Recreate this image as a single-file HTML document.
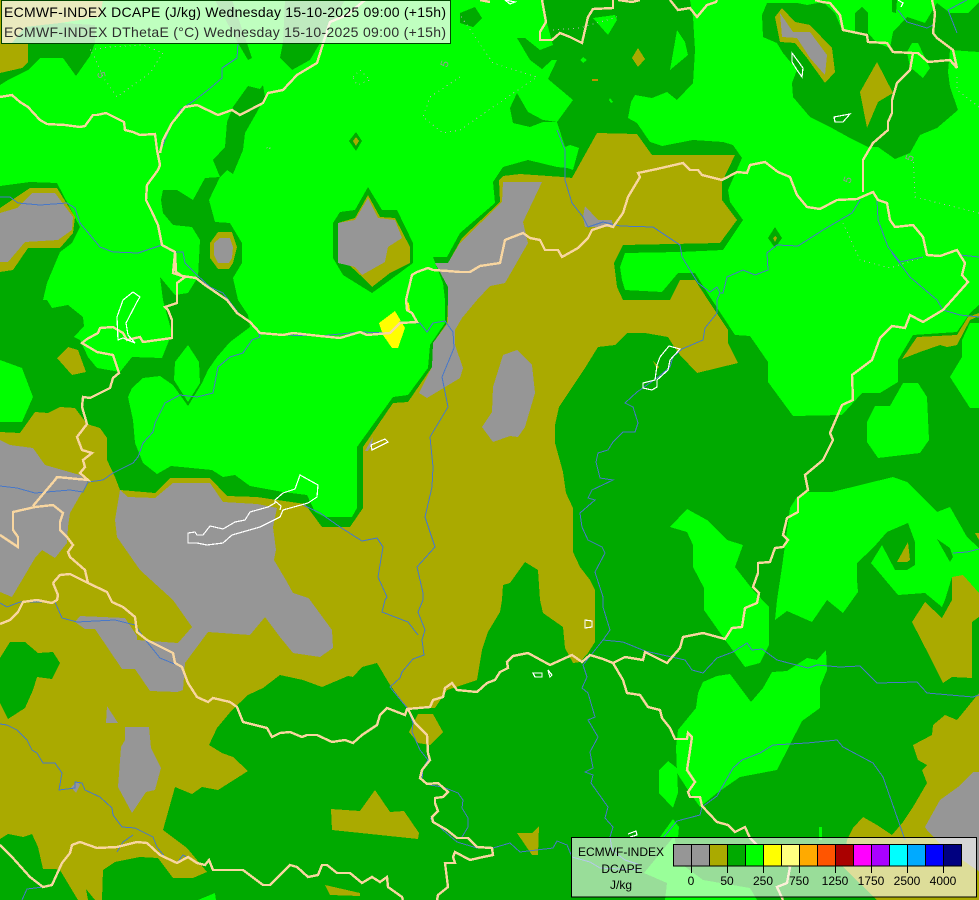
<!DOCTYPE html>
<html><head><meta charset="utf-8"><title>ECMWF-INDEX DCAPE</title>
<style>html,body{margin:0;padding:0;background:#0f0;width:979px;height:900px;overflow:hidden}svg{display:block}text{font-family:"Liberation Sans",sans-serif}</style></head>
<body>
<svg width="979" height="900" viewBox="0 0 979 900" xmlns="http://www.w3.org/2000/svg" shape-rendering="crispEdges">
<rect width="979" height="900" fill="#00ff00"/>
<g fill="#00aa00">
<polygon points="543,0 690,0 693,17 695,50 693,83 677,100 667,92 652,98 635,95 631,102 628,118 637,123 650,142 662,146 693,140 723,142 733,145 742,158 728,190 730,202 743,220 723,250 680,252 625,253 620,267 622,280 625,290 662,292 678,273 695,273 710,297 735,335 750,336 768,362 768,382 793,416 842,415 862,393 880,393 898,382 898,360 913,335 957,332 970,313 979,305 979,900 0,900 0,186 30,182 57,183 80,227 72,243 60,252 47,283 43,300 47,300 52,308 68,305 83,317 84,326 74,337 80,340 88,357 97,368 120,372 132,357 162,358 172,333 163,300 160,277 175,295 188,293 198,277 200,240 192,227 173,225 163,213 161,200 163,190 177,190 193,200 205,178 220,177 213,160 225,147 227,122 233,107 248,86 260,89 263,85 265,97 257,112 245,133 243,150 233,174 227,170 220,177 209,200 215,222 230,223 242,243 242,263 233,278 238,300 248,315 250,327 230,342 217,357 208,370 202,383 188,406 173,385 160,376 143,378 132,388 128,397 133,420 135,443 143,463 157,474 171,466 212,470 223,477 235,475 250,486 283,492 307,495 315,512 325,517 352,517 357,508 357,447 393,397 408,395 428,368 430,345 445,323 445,300 443,283 433,257 447,257 460,233 495,203 493,182 503,167 528,160 557,167 567,168 565,147 557,122 573,100 548,79 557,60 552,60 542,69 530,60 517,38 525,38 540,50 553,45 547,23"/>
<polygon points="517,93 528,112 543,120 557,122 543,122 530,127 513,123 510,108"/>
<polygon points="460,13 475,7 482,18 473,27 460,23"/>
<polygon points="762,15 767,3 797,3 807,5 823,2 835,13 842,30 855,33 855,13 862,7 868,13 868,33 877,43 890,48 893,32 907,17 925,23 937,3 950,13 968,13 979,2 979,52 950,50 948,72 950,87 958,110 937,128 920,135 910,153 895,159 878,147 868,147 850,138 830,127 810,117 793,97 792,83 797,70 783,53 777,43 763,37"/>
<polygon points="892,0 897,0 896,13 892,12"/>
<polygon points="12,43 25,27 60,23 95,25 95,43 90,56 76,76 63,58 40,58 28,70 8,80 0,85 0,43"/>
<polygon points="215,0 232,0 252,58 248,60 238,43"/>
<polygon points="285,0 345,0 320,43 310,60 292,70 280,58 283,43"/>
<polygon points="368,187 382,210 397,210 413,243 413,263 390,280 372,293 343,275 333,258 333,223 340,212 355,210"/>
<polygon points="356,132 362,141 356,151 349,141"/>
<polygon points="775,227 782,238 775,248 768,238"/>
</g>
<g fill="#00ff00">
<polygon points="570,145 579,148 573,170 567,168 565,147"/>
<polygon points="593,18 615,15 617,20 608,35"/>
<polygon points="677,30 685,42 688,55 670,70 673,53"/>
<polygon points="583,57 587,60 583,63 580,60"/>
<polygon points="610,98 613,102 611,103 609,100"/>
<polygon points="912,43 918,43 930,68 923,78 910,67 907,52"/>
<polygon points="188,345 199,362 200,383 188,402 174,380 175,362"/>
<polygon points="0,360 22,368 33,397 22,422 0,422"/>
<polygon points="970,323 979,323 979,408 970,408 950,377 962,357 962,340"/>
<polygon points="903,383 918,383 927,397 929,440 920,453 878,458 867,442 867,422 875,406 890,406"/>
<polygon points="797,497 808,492 832,492 893,477 907,482 937,512 950,507 967,537 979,548 979,593 963,575 952,577 945,600 942,607 925,593 898,595 871,563 882,545 895,570 907,570 915,565 915,542 908,523 887,532 873,548 857,563 857,580 858,592 843,613 827,600 812,622 787,611 775,620 777,600 782,567 790,508"/>
<polygon points="687,509 707,520 727,540 743,545 735,567 753,590 769,607 769,645 760,663 745,667 723,637 704,610 704,588 693,567 693,545 687,532 670,527"/>
<polygon points="703,682 717,676 730,674 751,702 763,688 772,672 787,671 807,658 817,660 826,650 827,670 820,687 820,708 802,721 777,770 740,777 717,793 700,807 688,790 677,773 676,747 678,730 696,708 698,693"/>
<polygon points="659,770 668,761 677,768 678,793 673,808 659,793"/>
<polygon points="660,837 673,819 679,827 678,838"/>
<polygon points="819,827 822,827 822,840 819,840"/>
<polygon points="675,835 644,873 667,883 665,900 757,900 750,888 703,880 676,860"/>
<polygon points="198,900 215,893 216,900"/>
</g>
<polygon fill="#00aa00" points="937,539 950,548 953,557 950,562"/>
<g fill="#aaaa00">
<polygon points="0,432 20,433 35,412 48,413 60,407 75,408 87,424 100,428 107,438 107,460 115,477 120,490 155,493 170,478 210,478 227,496 257,497 277,500 305,504 322,527 350,527 363,508 363,447 393,403 408,402 432,367 433,343 447,323 448,300 448,287 435,263 448,263 462,238 500,202 499,180 503,176 520,174 563,177 572,178 597,133 637,134 652,155 735,155 722,182 722,200 737,220 720,243 623,245 614,263 617,287 623,300 670,300 680,280 695,280 708,300 728,330 728,343 738,363 697,373 680,355 673,345 668,337 645,333 627,333 615,345 598,347 585,368 559,407 555,425 555,443 563,472 566,493 573,508 573,552 580,567 590,580 595,590 595,642 588,653 580,662 573,663 565,648 563,627 543,613 540,600 538,570 525,562 510,583 503,585 502,600 500,612 488,632 482,650 477,680 447,690 435,708 407,708 390,685 377,663 362,667 353,677 348,676 322,687 303,680 280,675 263,688 248,695 232,710 217,728 209,745 222,753 233,757 248,771 218,790 202,787 192,794 175,787 163,830 187,848 207,872 193,878 173,878 158,858 140,857 115,862 103,870 102,900 95,900 86,889 88,900 78,900 60,870 55,869 43,869 38,847 32,834 23,837 8,834 0,839"/>
<polygon points="0,0 103,0 100,17 60,23 25,27 12,43 0,43"/>
<polygon points="0,43 28,43 28,62 22,68 0,73"/>
<polygon points="0,208 30,188 57,188 75,217 73,233 60,248 28,248 13,270 0,272"/>
<polygon points="368,195 380,217 395,218 410,247 410,263 390,273 372,287 360,275 347,263 338,262 338,223 355,218"/>
<polygon points="218,232 232,232 237,247 233,263 229,269 218,269 210,258 210,243"/>
<polygon points="356,137 359,141 356,146 353,141"/>
<polygon points="775,236 777,238 775,242 773,238"/>
<polygon points="638,48 645,59 638,67 632,58"/>
<polygon points="775,17 782,8 795,22 810,25 832,48 835,72 825,83 807,58 795,43 780,42"/>
<polygon points="877,62 893,93 878,102 867,128 860,92"/>
<polygon points="57,358 68,347 78,350 86,372 72,375"/>
<polygon points="902,359 917,337 957,335 968,317 979,313 979,316 970,320 957,345 947,347 940,345 920,352"/>
<polygon points="897,562 908,542 910,560 907,562"/>
<polygon points="952,577 963,575 979,593 979,617 972,622 972,678 952,677 943,683 930,657 912,622 925,602 942,618 952,600"/>
<polygon points="945,715 957,720 979,693 979,900 877,900 843,867 847,840 853,828 863,817 877,825 892,835 903,822 913,807 927,783 922,770 927,765 918,760 913,745 932,735 933,725"/>
<polygon points="418,714 433,714 443,732 430,745 418,743 409,732"/>
<polygon points="375,790 390,812 404,811 419,833 418,839 332,830 331,809 360,811"/>
<polygon points="325,885 360,893 360,896 330,895"/>
<polygon points="517,833 532,833 539,826 538,855 532,855"/>
<polygon points="653,361 659,367 657,369"/>
<polygon points="975,533 979,533 979,540"/>
<polygon fill="#c09000" points="592,79 598,79 598,81 592,81"/>
</g>
<polygon fill="#00aa00" points="0,658 10,642 25,642 38,653 53,652 60,663 52,679 37,677 33,690 25,708 8,719 0,703"/>
<g fill="#969696">
<polygon points="0,213 17,208 32,193 55,193 73,217 72,230 58,240 25,242 8,262 0,262"/>
<polygon points="368,198 378,218 395,220 402,238 388,247 385,262 362,275 355,267 338,263 338,223 355,220"/>
<polygon points="220,238 230,238 233,247 232,258 229,263 218,263 214,255 214,243"/>
<polygon points="780,13 793,32 810,32 827,55 825,75 810,58 797,38 782,37"/>
<polygon points="460,243 502,202 503,182 542,182 523,222 528,243 505,283 490,286 477,300 462,318 455,330 455,345 463,368 460,378 427,398 419,393 432,367 433,343 448,323 448,287 435,263 448,263"/>
<polygon points="585,206 598,220 612,220 613,227 585,227 583,217"/>
<polygon points="365,451 373,437 372,444 368,451"/>
<polygon points="517,350 532,365 535,393 525,427 518,437 510,436 493,442 482,427 492,412 493,387 503,355"/>
<polygon points="120,490 128,497 155,498 173,483 210,483 223,502 257,504 277,508 273,527 276,550 274,560 287,582 293,593 308,598 310,600 332,630 333,648 320,657 293,653 280,637 265,617 250,635 208,632 185,663 183,690 177,692 150,691 135,669 122,669 95,629 85,629 75,622 80,616 125,618 137,636 137,640 178,643 192,627 173,600 140,570 117,537 115,520"/>
<polygon points="0,440 10,445 33,448 45,465 80,475 88,482 82,492 70,513 68,527 67,543 55,558 42,550 35,558 12,597 0,592"/>
<polygon points="107,706 118,723 106,723"/>
<polygon points="125,727 149,727 151,748 161,768 155,790 146,792 132,813 118,787 121,747 125,740"/>
<polygon points="71,787 77,782 80,785 76,793"/>
<polygon points="973,772 979,772 979,872 977,870 943,847 927,830 925,827 940,800 958,787"/>
</g>
<polygon fill="#ffff00" points="379,323 395,311 405,328 398,348 392,348 383,335"/>
<polygon fill="#ffff00" points="405,301 409,303 410,310 406,309"/>
<g fill="none" stroke="#b4b4b4" stroke-width="1" stroke-dasharray="1 4">
<path d="M90,50 110,47 143,45 163,53 150,73 117,97 103,77 95,58Z"/>
<path d="M353,77 360,70 370,80 357,85Z"/>
<path d="M460,77 430,97 423,117 443,133 460,130 493,107 537,77 493,63 460,15"/>
<path d="M553,30 580,28 617,17"/>
<path d="M913,157 915,197 979,213M843,223 860,260 890,268 923,257M957,77 957,90 979,107"/>
<path d="M267,148 268,146 270,148 268,150Z"/>
</g>
<g fill="#9a9a9a" font-size="11" shape-rendering="auto">
<text x="0" y="0" transform="translate(97,73) rotate(75)" style="font-size:11px">5</text>
<text x="0" y="0" transform="translate(447,68) rotate(-70)" style="font-size:11px">5</text>
<text x="0" y="0" transform="translate(850,184) rotate(-70)" style="font-size:11px">5</text>
<text x="0" y="0" transform="translate(912,162) rotate(-70)" style="font-size:11px">5</text>
</g>
<g fill="none" stroke="#4878c8" stroke-width="1">
<path d="M238,43 237,58 222,68 222,78 208,90 195,100 180,110 172,123 165,140 160,153"/>
<path d="M0,197 10,197 18,203 40,205 67,203 75,208 80,223 100,247 113,252 138,253 162,245 173,252 183,252 185,263 197,275 210,287 223,293 230,302 240,315 257,328 260,337 252,340 243,353 230,357 218,367 213,393 197,397 180,395 165,403 155,423 153,432 143,443 138,457 133,463 113,473 103,480 88,482 83,492 70,490 35,493 17,488 0,486"/>
<path d="M260,334 283,335 320,336 360,332 390,333 400,322 420,323 427,332 433,323 445,321 453,332 454,348 442,377 448,407 430,437 433,467 432,487 425,517 435,547 417,567 423,593 423,600 418,612 425,630 422,640 424,655 413,659 402,672 400,678 390,687 408,709 413,723 412,732 420,750 428,760 423,768 422,780 430,785 443,787 458,793 463,800 462,808 468,818 468,827 462,837"/>
<path d="M430,818 443,830 457,842 477,848 493,848 510,843 520,852 553,848 557,841 567,845 572,857 590,862 600,868 640,870"/>
<path d="M303,505 320,513 340,527 362,541 377,538 383,547 378,577 387,597 385,600 382,612 408,622 418,635"/>
<path d="M0,724 7,725 17,730 27,740 32,750 37,753 43,763 55,763 62,773 59,790 75,788 75,782 82,783 85,790 100,797 112,808 113,815 122,827 135,828 153,837 157,847 165,857 177,863 183,855 197,863"/>
<path d="M0,603 7,607 20,602 55,602 62,618 77,622 115,620 135,625 147,642 160,658 177,665"/>
<path d="M22,900 27,889 43,887M117,852 123,842 133,835M62,863 52,885"/>
<path d="M557,130 565,150 565,180 572,203 583,217 588,227 603,222 620,226 653,227 668,237 680,245 682,257 698,283 710,292 717,287 720,293 717,300 717,313 705,328 703,340 682,349 673,357 670,367 657,378 637,392 625,403 633,407 638,423 635,432 623,432 613,442 608,450 598,453 596,462 600,478 613,480 592,490 588,498 595,500 580,513 582,527 588,540 602,547 605,553 595,572 603,597 603,607 610,630 603,640 583,665 587,677 582,688 588,693 595,717 588,720 598,737 590,752 593,768 585,772 593,775 591,783 608,807 605,818 613,827 610,837 612,850 625,860 640,865"/>
<path d="M603,640 623,642 645,651 685,660 692,670 703,673 717,658 733,652 747,643 752,650 762,649 777,660 808,668 817,665 840,667 860,666 877,683 917,682 927,693 973,697 979,695"/>
<path d="M663,838 677,821 700,815 702,807 717,796 733,768 742,760 760,753 773,745 807,743 837,740 843,747 873,763 883,777 897,817 905,840"/>
<path d="M860,200 852,213 823,230 798,246 777,245 767,253 768,270 755,275 743,270 727,277 723,293 720,293"/>
<path d="M877,200 878,220 888,247 900,262 923,257M892,253 910,277 937,300 943,310 960,315 979,317M960,255 979,257"/>
<path d="M953,553 967,552 979,549"/>
<path d="M898,10 907,22 927,28 933,25M957,33 948,10 967,0"/>
</g>
<g fill="none" stroke="#f8d6a0" stroke-width="2.4">
<path d="M0,97 12,95 20,102 28,107 40,120 47,124 65,125 80,127 85,126 93,115 97,115 106,113 118,119 124,122 125,130 133,132 140,135 155,134 157,150 160,165 158,170 147,185 146,200 152,212 158,225 162,245 175,252 176,272 182,276 196,278 205,285 227,300 237,313 250,322 260,333 283,335 293,333 320,336 340,338 360,332 367,335 390,333 400,323 417,322 412,313 407,310 406,300 412,275 417,272 428,268 433,270 448,271 460,272 470,272 480,266 500,263 505,240 510,238 523,233 530,238 540,240 545,250 558,250 562,257 578,248 588,238 592,230 607,225 613,227 623,213 628,197 640,177 638,173 657,169 683,163 690,170 698,170 702,175 722,180 737,172 747,173 750,165 765,162 778,172 790,177 797,195 807,207 820,209 837,200 857,199 873,192 878,200 887,203 890,220 895,227 913,225 923,237 927,255 940,256 957,250 965,263 962,275 968,282 952,300 943,310 923,322 910,315 905,328 892,326 880,338 872,360 852,375 853,400 842,405 830,433 833,440 823,460 805,475 808,490 798,498 798,512 787,518 783,535 788,540 783,547 775,548 770,562 758,563 758,573 753,587 759,593 757,603 745,608 742,627 732,628 725,639 703,633 683,637 680,648 667,663 645,652 643,660 625,657 613,663 603,659 590,655 582,662 572,655 550,665 528,653 513,656 507,662 508,668 500,672 495,680 487,683 477,692 457,690 452,683 445,688 443,697 433,700 430,707 407,709 405,715 387,708 380,715 377,725 362,735 353,743 345,740 332,742 317,735 307,735 302,737 290,732 280,733 272,737 267,728 243,722 237,707 230,702 213,698 208,702 197,697 188,683 182,667 175,663 173,653 147,640 137,632 135,617 123,607 112,602 107,592 88,583 85,570 70,557 68,552 73,545 67,537 60,530 60,522 63,513 53,505 35,507 13,512 13,530 18,537 18,547 0,535"/>
<path d="M33,506 55,480 57,477 88,480 80,473 85,467 83,460 92,453 82,450 77,437 87,424 82,407 83,397 90,398 110,388 113,378 119,373 113,355 97,352 82,343 87,339 98,333 100,328 113,327 123,333 127,340 140,337 143,342 172,338 172,320 168,310 165,307 177,303 177,283 185,277 173,273 175,253"/>
<path d="M53,583 60,575 70,574 88,583M53,583 58,595 57,600 52,603 37,600 23,602 18,612 10,620 0,624"/>
<path d="M0,845 12,857 30,877 43,887 52,885 62,863 70,853 72,845 80,842 97,848 117,847 137,842 147,843 160,855 177,863 188,857 197,863 205,865 209,860 213,870 220,870 243,870 263,885 270,885 280,875 290,865 297,867 308,877 318,875 322,865 327,865 337,873 350,873 362,883 372,877 380,882 387,877 388,887 402,897 403,900"/>
<path d="M408,709 415,723 427,735 428,753 430,760 422,770 420,778 427,784 438,783 448,792 443,797 435,798 435,803 438,811 432,817 433,822 447,830 457,838 468,838 477,847 492,848 493,855 483,857 470,860 455,852 453,857 455,863 445,863 448,887 438,895 437,900"/>
<path d="M613,663 623,680 627,693 640,695 648,707 660,710 662,718 670,728 675,739 687,739 688,733 692,737 689,757 687,770 695,782 688,792 690,797 700,797 702,806 717,822 728,825 735,832 745,827 750,838 762,850 780,855 790,867 787,883 777,887 783,900"/>
<path d="M863,192 863,160 873,143 888,130 888,122 892,113 892,100 897,83 910,70 913,53 893,52 887,43 868,42 867,35 843,30 840,15 830,3 822,2 815,0"/>
<path d="M913,53 918,53 928,62 950,60 957,68 953,50 937,38 933,33 935,13 932,0"/>
<path d="M542,0 546,22 540,32 540,40 552,40 560,33 570,37 582,43 588,17 593,9 613,8 613,0"/>
<path d="M670,0 678,10 690,8 697,17 707,5 716,2 717,0"/>
<path d="M618,0 632,2 640,0M480,0 490,2"/>
<path d="M365,0 347,15 330,22 322,47 317,63 297,75 283,90 268,93 263,103 240,115 232,110 218,115 197,105 185,107 172,123 163,140 160,153"/>
</g>
<g fill="none" stroke="#ffffff" stroke-width="1.2">
<path d="M188,533 195,532 197,535 203,535 210,526 223,529 235,522 245,520 250,512 268,507 275,503 275,500 283,493 295,489 300,475 318,485 317,497 308,503 283,510 280,517 260,527 232,535 223,543 207,545 197,543 188,543Z"/>
<path d="M275,501 281,506 280,510"/>
<path d="M371,445 385,439 388,442 372,450Z"/>
<path d="M117,317 123,300 133,292 140,297 138,300 126,323 128,335 135,343 123,338 118,340Z"/>
<path d="M669,346 680,349 670,360 668,370 657,380 657,387 652,390 643,388 643,383 655,380 657,365 660,357Z"/>
<path d="M533,673 542,673 542,677 535,677Z"/>
<path d="M548,670 552,675 550,677 549,674Z"/>
<path d="M585,620 592,621 592,627 585,628Z"/>
<path d="M505,0 515,2 510,4Z"/>
<path d="M898,0 903,3 901,7"/>
<path d="M792,53 803,68 802,77 797,70 792,62Z"/>
<path d="M834,117 850,114 843,122 835,122Z"/>
<path d="M628,834 636,831 637,835 630,837"/>
</g>
<rect x="1.5" y="0.5" width="449" height="43" fill="#ffffff" fill-opacity="0.75" stroke="#004400" stroke-width="1"/>
<g shape-rendering="auto">
<text x="4" y="17" font-size="14" fill="#000000" textLength="442" lengthAdjust="spacing">ECMWF-INDEX DCAPE (J/kg) Wednesday 15-10-2025 09:00 (+15h)</text>
<text x="4" y="37" font-size="14" fill="#2e2e2e" textLength="442" lengthAdjust="spacing">ECMWF-INDEX DThetaE (°C) Wednesday 15-10-2025 09:00 (+15h)</text>
</g>
<rect x="571.5" y="837.5" width="405" height="59.5" fill="#ffffff" fill-opacity="0.6" stroke="#000000" stroke-width="1"/>
<g stroke="#000000" stroke-width="1">
<rect x="673.5" y="844.5" width="18" height="21.5" fill="#969696"/>
<rect x="691.5" y="844.5" width="18" height="21.5" fill="#969696"/>
<rect x="709.5" y="844.5" width="18" height="21.5" fill="#aaaa00"/>
<rect x="727.5" y="844.5" width="18" height="21.5" fill="#00aa00"/>
<rect x="745.5" y="844.5" width="18" height="21.5" fill="#00ff00"/>
<rect x="763.5" y="844.5" width="18" height="21.5" fill="#ffff00"/>
<rect x="781.5" y="844.5" width="18" height="21.5" fill="#ffff80"/>
<rect x="799.5" y="844.5" width="18" height="21.5" fill="#ffaa00"/>
<rect x="817.5" y="844.5" width="18" height="21.5" fill="#ff5500"/>
<rect x="835.5" y="844.5" width="18" height="21.5" fill="#aa0000"/>
<rect x="853.5" y="844.5" width="18" height="21.5" fill="#ff00ff"/>
<rect x="871.5" y="844.5" width="18" height="21.5" fill="#aa00ff"/>
<rect x="889.5" y="844.5" width="18" height="21.5" fill="#00ffff"/>
<rect x="907.5" y="844.5" width="18" height="21.5" fill="#00aaff"/>
<rect x="925.5" y="844.5" width="18" height="21.5" fill="#0000ff"/>
<rect x="943.5" y="844.5" width="18" height="21.5" fill="#000080"/>
<path d="M691.5,866V873M727.5,866V873M763.5,866V873M799.5,866V873M835.5,866V873M871.5,866V873M907.5,866V873M943.5,866V873" fill="none"/>
</g>
<g shape-rendering="auto" font-size="12" fill="#000000" text-anchor="middle">
<text x="621" y="856">ECMWF-INDEX</text>
<text x="622" y="873">DCAPE</text>
<text x="621" y="889">J/kg</text>
<text x="691" y="885">0</text>
<text x="727" y="885">50</text>
<text x="763" y="885">250</text>
<text x="799" y="885">750</text>
<text x="835" y="885">1250</text>
<text x="871" y="885">1750</text>
<text x="907" y="885">2500</text>
<text x="943" y="885">4000</text>
</g>
</svg>
</body></html>
